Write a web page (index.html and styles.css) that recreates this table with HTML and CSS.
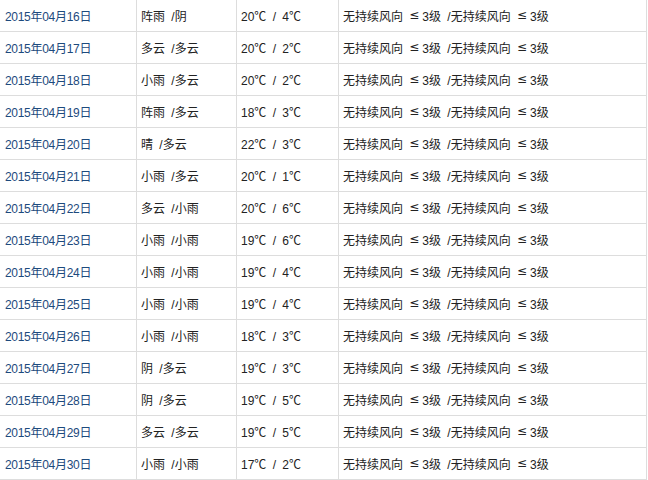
FILE: index.html
```html
<!DOCTYPE html>
<html lang="zh-CN">
<head>
<meta charset="utf-8">
<link rel="stylesheet" href="styles.css">
</head>
<body>
<div class="table">
  <div class="row"><div class="cell date">2015年04月16日</div><div class="cell">阵雨 /阴</div><div class="cell">20℃ / 4℃</div><div class="cell">无持续风向 <span class="le">≤</span>3级 /无持续风向 <span class="le">≤</span>3级</div></div>
  <div class="row"><div class="cell date">2015年04月17日</div><div class="cell">多云 /多云</div><div class="cell">20℃ / 2℃</div><div class="cell">无持续风向 <span class="le">≤</span>3级 /无持续风向 <span class="le">≤</span>3级</div></div>
  <div class="row"><div class="cell date">2015年04月18日</div><div class="cell">小雨 /多云</div><div class="cell">20℃ / 2℃</div><div class="cell">无持续风向 <span class="le">≤</span>3级 /无持续风向 <span class="le">≤</span>3级</div></div>
  <div class="row"><div class="cell date">2015年04月19日</div><div class="cell">阵雨 /多云</div><div class="cell">18℃ / 3℃</div><div class="cell">无持续风向 <span class="le">≤</span>3级 /无持续风向 <span class="le">≤</span>3级</div></div>
  <div class="row"><div class="cell date">2015年04月20日</div><div class="cell">晴 /多云</div><div class="cell">22℃ / 3℃</div><div class="cell">无持续风向 <span class="le">≤</span>3级 /无持续风向 <span class="le">≤</span>3级</div></div>
  <div class="row"><div class="cell date">2015年04月21日</div><div class="cell">小雨 /多云</div><div class="cell">20℃ / 1℃</div><div class="cell">无持续风向 <span class="le">≤</span>3级 /无持续风向 <span class="le">≤</span>3级</div></div>
  <div class="row"><div class="cell date">2015年04月22日</div><div class="cell">多云 /小雨</div><div class="cell">20℃ / 6℃</div><div class="cell">无持续风向 <span class="le">≤</span>3级 /无持续风向 <span class="le">≤</span>3级</div></div>
  <div class="row"><div class="cell date">2015年04月23日</div><div class="cell">小雨 /小雨</div><div class="cell">19℃ / 6℃</div><div class="cell">无持续风向 <span class="le">≤</span>3级 /无持续风向 <span class="le">≤</span>3级</div></div>
  <div class="row"><div class="cell date">2015年04月24日</div><div class="cell">小雨 /小雨</div><div class="cell">19℃ / 4℃</div><div class="cell">无持续风向 <span class="le">≤</span>3级 /无持续风向 <span class="le">≤</span>3级</div></div>
  <div class="row"><div class="cell date">2015年04月25日</div><div class="cell">小雨 /小雨</div><div class="cell">19℃ / 4℃</div><div class="cell">无持续风向 <span class="le">≤</span>3级 /无持续风向 <span class="le">≤</span>3级</div></div>
  <div class="row"><div class="cell date">2015年04月26日</div><div class="cell">小雨 /小雨</div><div class="cell">18℃ / 3℃</div><div class="cell">无持续风向 <span class="le">≤</span>3级 /无持续风向 <span class="le">≤</span>3级</div></div>
  <div class="row"><div class="cell date">2015年04月27日</div><div class="cell">阴 /多云</div><div class="cell">19℃ / 3℃</div><div class="cell">无持续风向 <span class="le">≤</span>3级 /无持续风向 <span class="le">≤</span>3级</div></div>
  <div class="row"><div class="cell date">2015年04月28日</div><div class="cell">阴 /多云</div><div class="cell">19℃ / 5℃</div><div class="cell">无持续风向 <span class="le">≤</span>3级 /无持续风向 <span class="le">≤</span>3级</div></div>
  <div class="row"><div class="cell date">2015年04月29日</div><div class="cell">多云 /多云</div><div class="cell">19℃ / 5℃</div><div class="cell">无持续风向 <span class="le">≤</span>3级 /无持续风向 <span class="le">≤</span>3级</div></div>
  <div class="row"><div class="cell date">2015年04月30日</div><div class="cell">小雨 /小雨</div><div class="cell">17℃ / 2℃</div><div class="cell">无持续风向 <span class="le">≤</span>3级 /无持续风向 <span class="le">≤</span>3级</div></div>
</div>
</body>
</html>
```
FILE: styles.css
```css
html, body {
  margin: 0;
  padding: 0;
  background: #fff;
}
body {
  font-family: "Liberation Sans", "Noto Sans CJK SC", sans-serif;
  font-size: 12px;
  color: #222;
}
.table {
  width: 647px;
}
.row {
  display: grid;
  grid-template-columns: 137px 100px 102px 308px;
  height: 32px;
}
.cell {
  box-sizing: border-box;
  height: 32px;
  border-right: 1px solid #dddddd;
  border-bottom: 1px solid #dddddd;
  padding-left: 4px;
  padding-bottom: 1px;
  display: flex;
  align-items: center;
  white-space: pre;
  word-spacing: 3px;
  overflow: hidden;
}
.cell.date {
  padding-left: 5px;
  color: #1d4a7d;
  word-spacing: 0;
  letter-spacing: -0.3px;
}
.le {
  display: inline-block;
  width: 13px;
  font-family: "DejaVu Sans", sans-serif;
  font-size: 12px;
  line-height: 12px;
  text-align: left;
}
```
